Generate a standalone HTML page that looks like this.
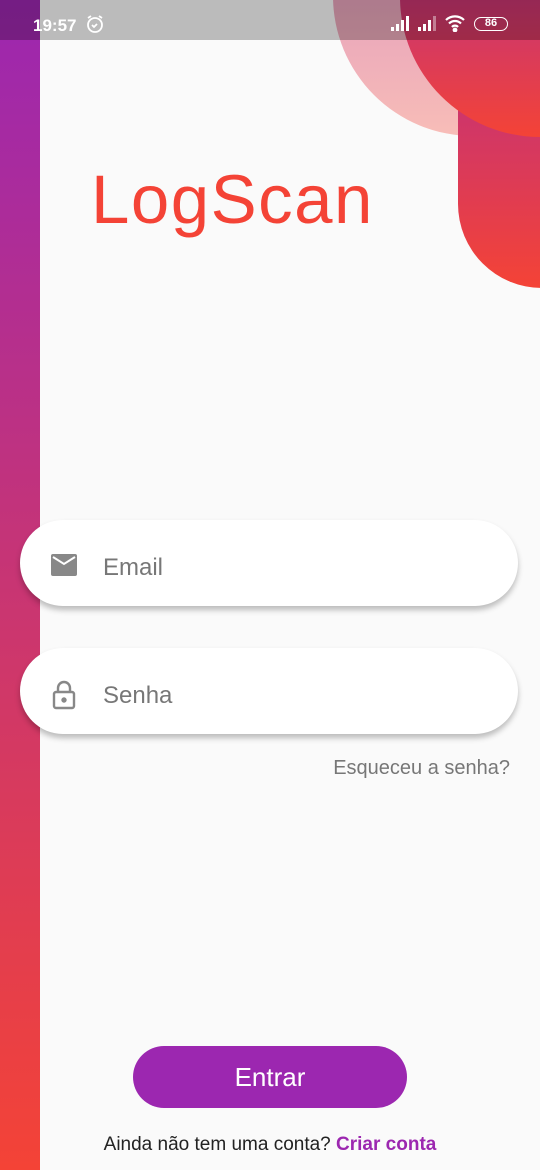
<!DOCTYPE html>
<html><head><meta charset="utf-8"><style>
*{margin:0;padding:0;box-sizing:border-box}
body{width:540px;height:1170px;overflow:hidden;background:#fafafa;position:relative;font-family:"Liberation Sans",Roboto,sans-serif}
.bar{position:absolute;left:0;top:0;width:40px;height:1170px;background:linear-gradient(#9c27b0,#f44336)}
.c1{position:absolute;left:333px;top:-144px;width:280px;height:280px;border-radius:50%;background:linear-gradient(#c85aa8,#f7a39b);opacity:.7}
.r{position:absolute;left:458px;top:-10px;width:100px;height:298px;border-bottom-left-radius:84px;background:linear-gradient(#b42c8e,#f44336)}
.c2{position:absolute;left:400px;top:-143px;width:280px;height:280px;border-radius:50%;background:linear-gradient(#9c27b0,#f44336)}
.status{position:absolute;left:0;top:0;width:540px;height:40px;background:rgba(0,0,0,.25);color:#fff;font-weight:bold;font-size:17px}
.title{position:absolute;left:91px;top:160px;font-size:69px;color:#f44336;letter-spacing:1.5px}
.field{position:absolute;left:20px;width:498px;height:86px;border-radius:43px;background:#fff;box-shadow:0 4px 6px rgba(0,0,0,.25)}
.field span{position:absolute;left:83px;top:36px;font-size:24px;color:#777;line-height:24px}
.field svg{position:absolute;left:30px}
.forgot{position:absolute;right:30px;top:757px;font-size:20px;color:#777}
.btn{position:absolute;left:133px;top:1046px;width:274px;height:62px;border-radius:31px;background:#9c27b0;color:#fff;font-size:26px;text-align:center;line-height:62px}
.bottom{position:absolute;left:0;width:540px;top:1134px;text-align:center;font-size:19px;color:#222}
.bottom b{color:#9c27b0}
</style></head><body>
<div class="bar"></div>
<div class="c1"></div>
<div class="r"></div>
<div class="c2"></div>
<div class="status">
<span style="position:absolute;left:33px;top:16px">19:57</span>
<svg style="position:absolute;left:85px;top:14px" width="20" height="20" viewBox="0 0 20 20" fill="none" stroke="#fff" stroke-width="1.8"><circle cx="10" cy="11" r="7"/><path d="M7 11l2 2 3-3M3 4l3-2M17 4l-3-2"/></svg>
<svg style="position:absolute;left:390px;top:15px" width="22" height="16" viewBox="0 0 22 16" fill="#fff"><rect x="1" y="12" width="3" height="4"/><rect x="6" y="9" width="3" height="7"/><rect x="11" y="5" width="3" height="11"/><rect x="16" y="1" width="3" height="15"/></svg>
<svg style="position:absolute;left:417px;top:15px" width="22" height="16" viewBox="0 0 22 16" fill="#fff"><rect x="1" y="12" width="3" height="4"/><rect x="6" y="9" width="3" height="7"/><rect x="11" y="5" width="3" height="11"/><rect x="16" y="1" width="3" height="15" opacity=".4"/></svg>
<svg style="position:absolute;left:444px;top:14px" width="22" height="18" viewBox="0 0 22 18" fill="none" stroke="#fff" stroke-width="2.2"><path d="M2 6a13 13 0 0 1 18 0M5 9.5a8.5 8.5 0 0 1 12 0M8 13a4 4 0 0 1 6 0"/><circle cx="11" cy="16" r="1.3" fill="#fff"/></svg>
<div style="position:absolute;left:474px;top:17px;width:34px;height:14px;border:1.5px solid #fff;border-radius:7px;font-size:11px;text-align:center;line-height:11px">86</div>
</div>
<div class="title">LogScan</div>
<div class="field" style="top:520px"><svg style="top:34px" width="28" height="22" viewBox="0 0 28 22"><rect x="1" y="0" width="26" height="22" rx="2" fill="#888"/><path d="M3 3l11 7 11-7" stroke="#fff" stroke-width="2" fill="none"/></svg><span>Email</span></div>
<div class="field" style="top:648px"><svg style="top:32px" width="28" height="30" viewBox="0 0 28 30" fill="none" stroke="#888" stroke-width="2.4"><rect x="4" y="12" width="20" height="16" rx="2"/><path d="M8 12V8a6 6 0 0 1 12 0v4"/><circle cx="14" cy="20" r="1.5" fill="#888"/></svg><span>Senha</span></div>
<div class="forgot">Esqueceu a senha?</div>
<div class="btn">Entrar</div>
<div class="bottom">Ainda não tem uma conta? <b>Criar conta</b></div>
</body></html>
